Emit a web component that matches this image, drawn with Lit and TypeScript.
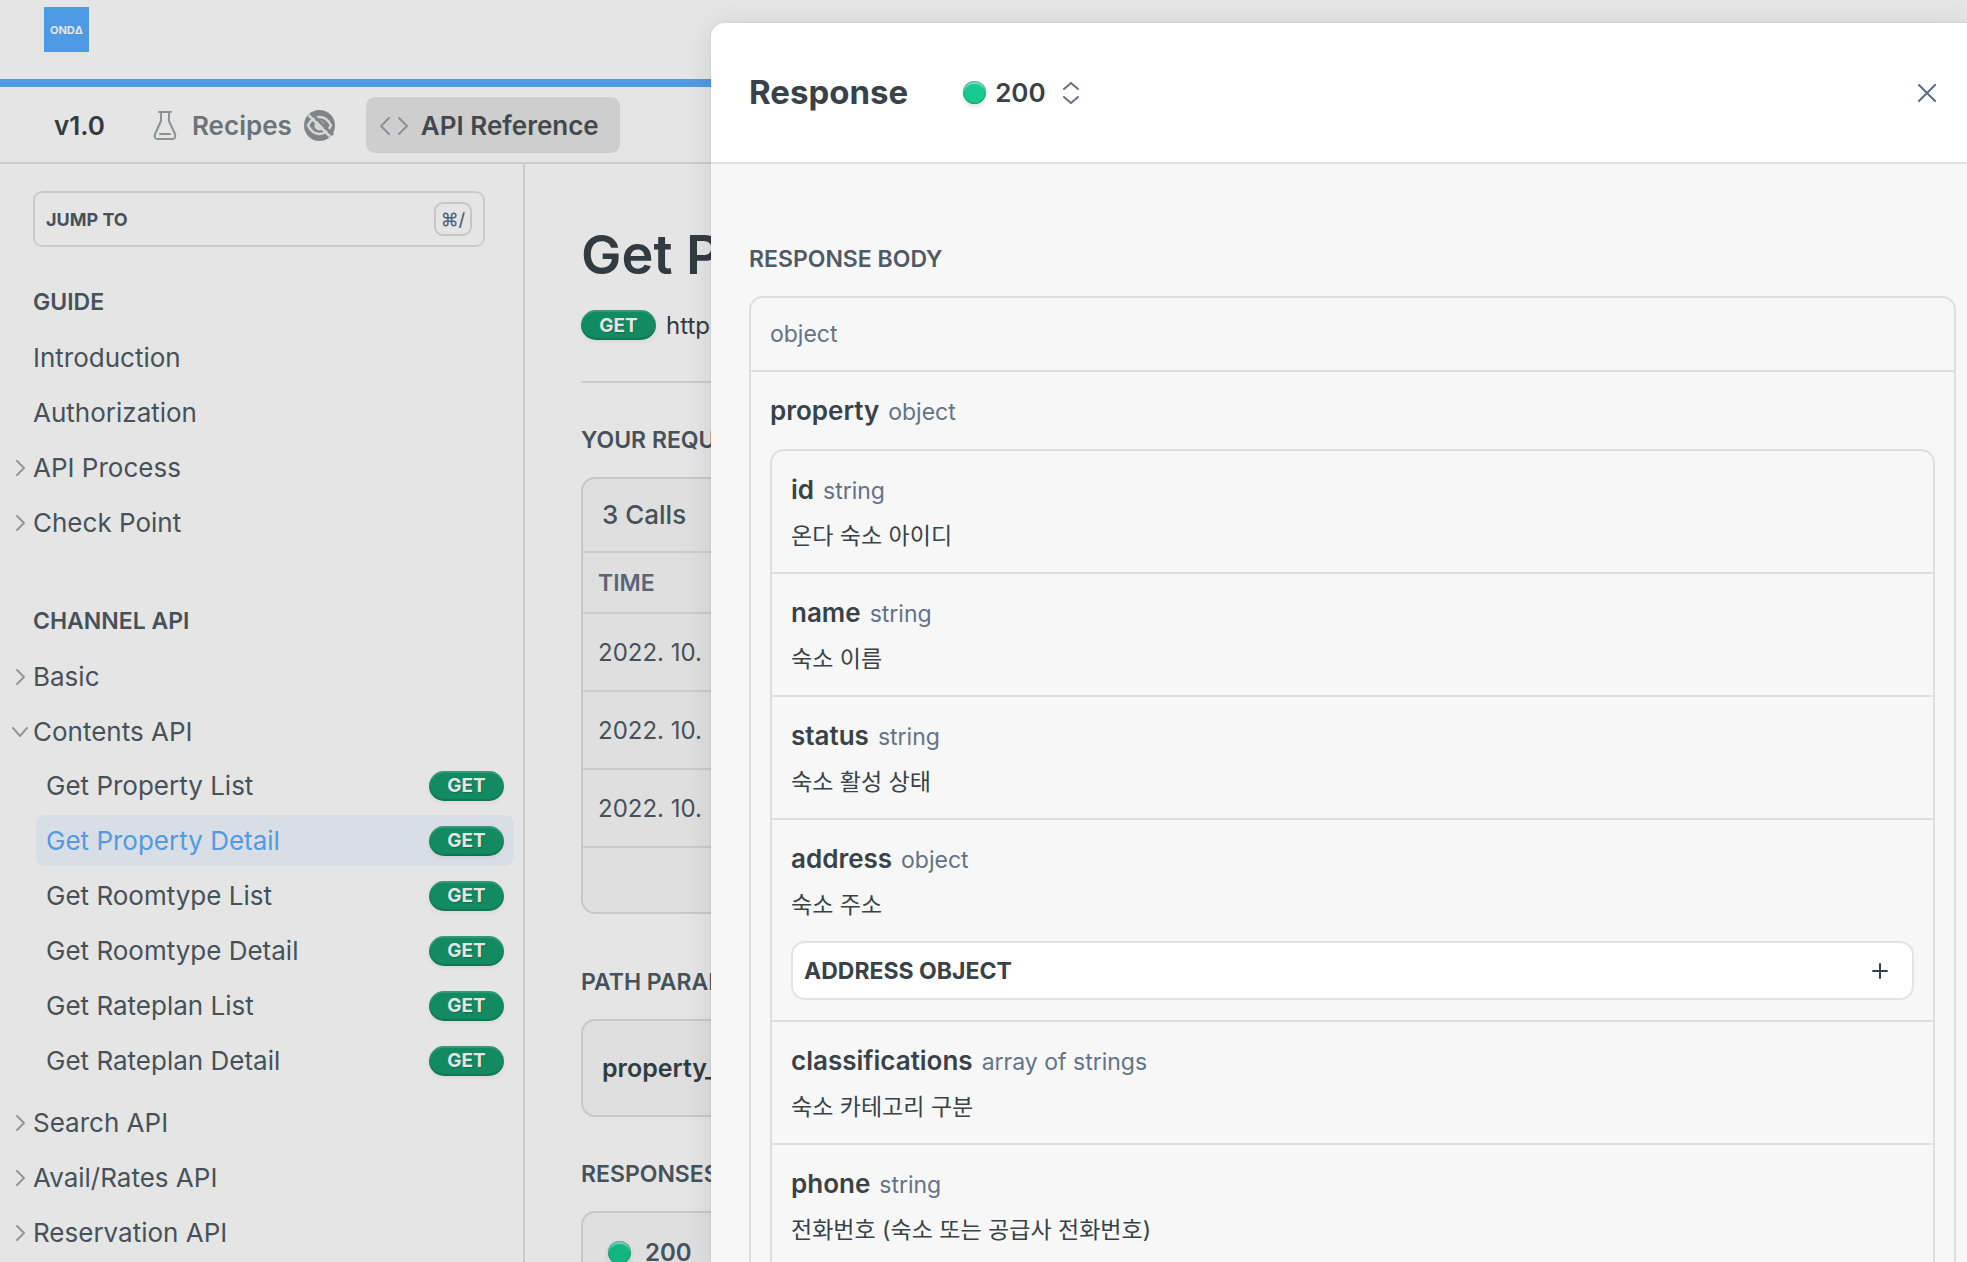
import { LitElement, html, css, svg } from "lit";
import { customElement, property } from "lit/decorators.js";
import { classMap } from "lit/directives/class-map.js";

interface NavItem {
  label: string;
  expandable?: boolean;
  open?: boolean;
  children?: { label: string; active?: boolean }[];
}

interface Field {
  name: string;
  type: string;
  desc: string;
  child?: string;
}

const GUIDE: NavItem[] = [
  { label: "Introduction" },
  { label: "Authorization" },
  { label: "API Process", expandable: true },
  { label: "Check Point", expandable: true },
];

const CHANNEL: NavItem[] = [
  { label: "Basic", expandable: true },
  {
    label: "Contents API",
    expandable: true,
    open: true,
    children: [
      { label: "Get Property List" },
      { label: "Get Property Detail", active: true },
      { label: "Get Roomtype List" },
      { label: "Get Roomtype Detail" },
      { label: "Get Rateplan List" },
      { label: "Get Rateplan Detail" },
    ],
  },
  { label: "Search API", expandable: true },
  { label: "Avail/Rates API", expandable: true },
  { label: "Reservation API", expandable: true },
];

const FIELDS: Field[] = [
  { name: "id", type: "string", desc: "온다 숙소 아이디" },
  { name: "name", type: "string", desc: "숙소 이름" },
  { name: "status", type: "string", desc: "숙소 활성 상태" },
  { name: "address", type: "object", desc: "숙소 주소", child: "ADDRESS OBJECT" },
  { name: "classifications", type: "array of strings", desc: "숙소 카테고리 구분" },
  { name: "phone", type: "string", desc: "전화번호 (숙소 또는 공급사 전화번호)" },
];

const stroke = (d: string, w: number, h: number, width = 2) => html`<svg
  width=${w}
  height=${h}
  viewBox="0 0 ${w} ${h}"
  fill="none"
  stroke="currentColor"
  stroke-width=${width}
  stroke-linecap="round"
  stroke-linejoin="round"
  aria-hidden="true"
>
  ${svg`<path d=${d} />`}
</svg>`;

const base = css`
  * {
    box-sizing: border-box;
  }
  a {
    color: inherit;
    text-decoration: none;
  }
  button,
  select {
    font: inherit;
    color: inherit;
    margin: 0;
    padding: 0;
    border: 0;
    background: none;
    cursor: pointer;
  }
  h1,
  h2,
  h3,
  p,
  ul {
    margin: 0;
    padding: 0;
    list-style: none;
  }
  svg {
    display: block;
    flex: none;
  }
`;

@customElement("method-badge")
export class MethodBadge extends LitElement {
  @property() method = "GET";

  static styles = css`
    :host {
      display: flex;
      flex: none;
      align-items: center;
      justify-content: center;
      width: 75px;
      height: 30px;
      border-radius: 15px;
      background: #128a62;
      color: #e5e5e5;
      font-size: 19px;
      font-weight: 700;
      text-shadow: 1px 1px 1px rgba(0, 0, 0, 0.2);
      box-shadow:
        inset 0 2px 1px rgba(255, 255, 255, 0.14),
        inset 0 -2px 1px rgba(0, 0, 0, 0.14),
        0 2px 4px rgba(0, 0, 0, 0.06);
    }
  `;

  render() {
    return html`<span>${this.method}</span>`;
  }
}

@customElement("status-dot")
export class StatusDot extends LitElement {
  static styles = css`
    :host {
      display: block;
      flex: none;
      width: 23px;
      height: 23px;
      border-radius: 50%;
      background: var(--dot, #15c98f);
      box-shadow:
        inset 0 0 0 1px rgba(0, 80, 50, 0.25),
        inset 0 3px 1px rgba(255, 255, 255, 0.4),
        0 2px 4px rgba(0, 0, 0, 0.14);
    }
  `;

  render() {
    return html``;
  }
}

@customElement("side-nav")
export class SideNav extends LitElement {
  static styles = [
    base,
    css`
      :host {
        display: block;
        padding: 27px 9px 0 10px;
      }
      .jump {
        display: flex;
        align-items: center;
        justify-content: space-between;
        width: calc(100% - 52px);
        height: 56px;
        margin: 0 29px 0 23px;
        padding: 0 11px;
        border: 2px solid #cbcbcb;
        border-radius: 9px;
        color: #475159;
        font-size: 18px;
        font-weight: 700;
      }
      .kbd {
        display: flex;
        align-items: center;
        justify-content: center;
        width: 38px;
        height: 34px;
        border: 2px solid #c6c6c6;
        border-radius: 9px;
        color: #55637a;
        font-family: Inter, "DejaVu Sans", sans-serif;
        font-size: 18px;
        font-weight: 500;
      }
      .heading {
        padding-left: 23px;
        color: #475159;
        font-size: 23px;
        font-weight: 600;
        line-height: 30px;
      }
      .section {
        padding-top: 40px;
      }
      .section + .section {
        padding-top: 56px;
      }
      .list {
        padding-top: 13px;
      }
      .item {
        display: flex;
        align-items: center;
        height: 55px;
        color: #475159;
        font-size: 26px;
      }
      .caret {
        display: flex;
        justify-content: center;
        width: 20px;
        margin-right: 3px;
        color: #92979c;
      }
      .children {
        display: flex;
        flex-direction: column;
        gap: 4px;
        padding: 1px 0 9px 26px;
      }
      .child {
        display: flex;
        align-items: center;
        justify-content: space-between;
        height: 51px;
        padding: 0 10px;
        border-radius: 9px;
        color: #475159;
        font-size: 26px;
      }
      .active {
        background: #d7dee5;
        color: #529ae4;
      }
    `,
  ];

  private item(item: NavItem) {
    const caret = item.open ? stroke("M1 1L8 9L15 1", 16, 10) : stroke("M1 1L8 8L1 15", 9, 16);
    return html`<li>
      <a class="item" href="#">
        <span class="caret">${item.expandable ? caret : ""}</span>${item.label}
      </a>
      ${item.children
        ? html`<ul class="children">
            ${item.children.map(
              (c) => html`<li>
                <a class=${classMap({ child: true, active: !!c.active })} href="#">
                  ${c.label}<method-badge></method-badge>
                </a>
              </li>`
            )}
          </ul>`
        : ""}
    </li>`;
  }

  render() {
    return html`
      <button class="jump">JUMP TO<span class="kbd">⌘/</span></button>
      <nav>
        <section class="section">
          <h2 class="heading">GUIDE</h2>
          <ul class="list">
            ${GUIDE.map((i) => this.item(i))}
          </ul>
        </section>
        <section class="section">
          <h2 class="heading">CHANNEL API</h2>
          <ul class="list">
            ${CHANNEL.map((i) => this.item(i))}
          </ul>
        </section>
      </nav>
    `;
  }
}

@customElement("endpoint-page")
export class EndpointPage extends LitElement {
  static styles = [
    base,
    css`
      :host {
        display: block;
        padding: 58px 56px 0;
        color: #323b41;
      }
      .title {
        font-size: 54px;
        font-weight: 600;
        line-height: 66px;
      }
      .endpoint {
        display: flex;
        align-items: center;
        gap: 10px;
        height: 74px;
        font-size: 24px;
      }
      .rule {
        height: 2px;
        margin: 19px 0 0;
        border: 0;
        background: #cbcbcb;
      }
      .heading {
        padding: 42px 0 22px;
        color: #475159;
        font-size: 23px;
        font-weight: 600;
        line-height: 30px;
      }
      .card {
        border: 2px solid #c8c8c8;
        border-radius: 14px;
        background: #dfdfdf;
        overflow: hidden;
      }
      .history {
        margin-bottom: 11px;
      }
      .calls {
        padding: 0 19px;
        color: #475159;
        font-size: 26px;
        font-weight: 500;
        line-height: 72px;
      }
      .table {
        width: 100%;
        border-collapse: collapse;
        color: #475159;
        font-size: 24px;
      }
      .table th {
        height: 61px;
        padding: 0 15px;
        border-top: 2px solid #cbcbcb;
        color: #59667a;
        font-size: 23px;
        font-weight: 600;
        text-align: left;
      }
      .table td {
        height: 78px;
        padding: 0 15px;
        border-top: 2px solid #cbcbcb;
      }
      .table .foot {
        height: 65px;
      }
      .param {
        padding: 0 19px;
        font-size: 25px;
        font-weight: 600;
        line-height: 94px;
      }
      .response {
        display: flex;
        align-items: center;
        gap: 14px;
        height: 78px;
        padding: 0 25px;
        color: #475159;
        font-size: 24px;
        font-weight: 600;
        --dot: #12b480;
      }
    `,
  ];

  render() {
    return html`
      <h1 class="title">Get Property Detail</h1>
      <div class="endpoint"><method-badge></method-badge><span>https://</span></div>
      <hr class="rule" />
      <h2 class="heading">YOUR REQUEST HISTORY</h2>
      <div class="card history">
        <p class="calls">3 Calls</p>
        <table class="table">
          <thead>
            <tr><th>TIME</th></tr>
          </thead>
          <tbody>
            <tr><td>2022. 10.</td></tr>
            <tr><td>2022. 10.</td></tr>
            <tr><td>2022. 10.</td></tr>
            <tr><td class="foot"></td></tr>
          </tbody>
        </table>
      </div>
      <h2 class="heading">PATH PARAMS</h2>
      <div class="card"><p class="param">property_id</p></div>
      <h2 class="heading">RESPONSES</h2>
      <div class="card">
        <div class="response"><status-dot></status-dot>200</div>
      </div>
    `;
  }
}

@customElement("response-drawer")
export class ResponseDrawer extends LitElement {
  static styles = [
    base,
    css`
      :host {
        display: flex;
        flex-direction: column;
        overflow: hidden;
        background: #f7f7f7;
        color: #384248;
      }
      .top {
        display: flex;
        flex: none;
        align-items: center;
        height: 141px;
        padding: 0 31px 0 38px;
        border-bottom: 2px solid #e0e0e0;
        background: #fff;
      }
      .title {
        padding-bottom: 2px;
        font-size: 33px;
        font-weight: 700;
        line-height: 44px;
      }
      .status {
        display: flex;
        align-items: center;
        gap: 9px;
        margin: 0 auto 0 55px;
      }
      .code {
        appearance: none;
        font-size: 26px;
        font-weight: 600;
      }
      .sort {
        margin-left: 8px;
        color: #637288;
        pointer-events: none;
      }
      .close {
        color: #5c6b80;
      }
      .body {
        padding: 80px 11px 0 38px;
      }
      .heading {
        padding-bottom: 22px;
        color: #4f5a66;
        font-size: 23px;
        font-weight: 600;
        line-height: 30px;
      }
      .schema,
      .nested {
        border: 2px solid #dfdfdf;
        border-radius: 14px;
      }
      .root {
        padding: 0 19px;
        border-bottom: 2px solid #dfdfdf;
        color: #637288;
        font-size: 23px;
        line-height: 72px;
      }
      .object {
        padding: 21px 19px;
      }
      .name {
        display: flex;
        align-items: baseline;
        gap: 9px;
        font-size: 26px;
        font-weight: 600;
        line-height: 36px;
      }
      .type {
        color: #637288;
        font-size: 23px;
        font-weight: 400;
      }
      .nested {
        margin-top: 19px;
        padding-bottom: 20px;
      }
      .field {
        padding: 21px 19px 20px;
      }
      .field + .field {
        border-top: 2px solid #dfdfdf;
      }
      .desc {
        padding-top: 11px;
        font-size: 23px;
        line-height: 32px;
      }
      .expand {
        display: flex;
        align-items: center;
        justify-content: space-between;
        width: 100%;
        height: 59px;
        margin-top: 20px;
        padding: 0 24px 0 11px;
        border: 2px solid #e3e3e3;
        border-radius: 14px;
        background: #fff;
        font-size: 23px;
        font-weight: 700;
      }
    `,
  ];

  render() {
    return html`
      <header class="top">
        <h2 class="title">Response</h2>
        <label class="status">
          <status-dot></status-dot>
          <select class="code" aria-label="Response status">
            <option>200</option>
          </select>
          <span class="sort">${stroke("M1 7L8 1L15 7M1 15L8 21L15 15", 16, 22)}</span>
        </label>
        <button class="close" aria-label="Close">${stroke("M1 1L17 17M17 1L1 17", 18, 18)}</button>
      </header>
      <div class="body">
        <h3 class="heading">RESPONSE BODY</h3>
        <div class="schema">
          <p class="root">object</p>
          <div class="object">
            <p class="name">property <span class="type">object</span></p>
            <ul class="nested">
              ${FIELDS.map(
                (f) => html`<li class="field">
                  <p class="name">${f.name} <span class="type">${f.type}</span></p>
                  <p class="desc">${f.desc}</p>
                  ${f.child
                    ? html`<button class="expand">${f.child}${stroke("M8 1V15M1 8H15", 16, 16)}</button>`
                    : ""}
                </li>`
              )}
            </ul>
          </div>
        </div>
      </div>
    `;
  }
}

@customElement("app-root")
export class AppRoot extends LitElement {
  static styles = [
    base,
    css`
      :host {
        position: relative;
        display: flex;
        flex-direction: column;
        height: 100vh;
        overflow: hidden;
        background: #e5e5e5;
        font-family: Inter, "Noto Sans CJK KR", sans-serif;
        color: #323b41;
      }
      .brand {
        flex: none;
        height: 87px;
        padding: 7px 44px 0;
        border-bottom: 8px solid #529ae4;
      }
      .logo {
        display: flex;
        align-items: center;
        justify-content: center;
        width: 45px;
        height: 45px;
        background: #4f9ae6;
        color: #e5e5e5;
        font-size: 11px;
        font-weight: 700;
      }
      .tabs {
        display: flex;
        flex: none;
        align-items: center;
        height: 77px;
        padding: 0 54px;
        border-bottom: 2px solid #cbcbcb;
        font-size: 26px;
        font-weight: 600;
      }
      .version {
        margin-right: 48px;
        padding-top: 2px;
      }
      .tab {
        display: flex;
        align-items: center;
        gap: 13px;
        height: 56px;
        padding: 2px 21px 0 14px;
        border-radius: 9px;
        color: #6c7478;
      }
      .recipes {
        gap: 12px;
        padding: 2px 0 0;
        margin-right: 31px;
      }
      .recipes .icon {
        margin-right: 3px;
      }
      .current {
        background: #cecece;
        color: #42494e;
      }
      .icon {
        color: #8b9194;
      }
      .columns {
        display: flex;
        flex: 1;
        min-height: 0;
      }
      .side {
        flex: none;
        width: 525px;
        border-right: 2px solid #cbcbcb;
      }
      .main {
        flex: 1;
        min-width: 0;
      }
      .drawer {
        position: absolute;
        top: 23px;
        right: 0;
        bottom: 0;
        left: 711px;
        border-top-left-radius: 14px;
        box-shadow:
          0 0 2px rgba(0, 0, 0, 0.12),
          0 4px 30px rgba(0, 0, 0, 0.1);
      }
    `,
  ];

  render() {
    return html`
      <header class="brand"><a class="logo" href="#">ONDΔ</a></header>
      <nav class="tabs">
        <a class="version" href="#">v1.0</a>
        <a class="tab recipes" href="#">
          <span class="icon">
            ${stroke("M6 1H18M8 1V10L2 23C1 26 2 28 5 28H19C22 28 23 26 22 23L16 10V1M7 23H17", 24, 29)}
          </span>
          Recipes
          <svg width="31" height="31" viewBox="0 0 62 62" fill="none" aria-hidden="true">
            <circle cx="31" cy="31" r="31" fill="#7f8587" />
            <path
              d="M8 31C14 19 22 14 31 14S48 19 54 31C48 43 40 48 31 48S14 43 8 31Z"
              stroke="#d6d7d7"
              stroke-width="5"
            />
            <circle cx="31" cy="31" r="10" fill="#d6d7d7" />
            <path d="M14 6L58 50" stroke="#7f8587" stroke-width="6" />
            <path d="M9 10L52 53" stroke="#d6d7d7" stroke-width="5" />
          </svg>
        </a>
        <a class="tab current" href="#">
          <span class="icon">${stroke("M9 1L1 9L9 17M19 1L27 9L19 17", 28, 18)}</span>
          API Reference
        </a>
      </nav>
      <div class="columns">
        <side-nav class="side"></side-nav>
        <endpoint-page class="main"></endpoint-page>
      </div>
      <response-drawer class="drawer" role="dialog" aria-label="Response"></response-drawer>
    `;
  }
}
